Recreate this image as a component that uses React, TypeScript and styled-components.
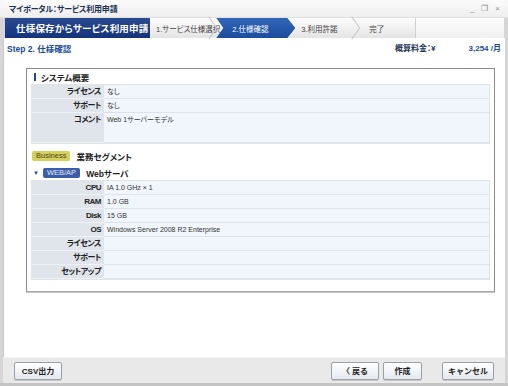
import React, { FC } from 'react';
import styled, { createGlobalStyle, css } from 'styled-components';

const GlobalStyle = createGlobalStyle`
  html, body {
    margin: 0;
    padding: 0;
    background: #ffffff;
  }

  body {
    font-family: "Liberation Sans", "Noto Sans CJK JP", sans-serif;
    font-feature-settings: "palt";
    color: #222;
  }
`;

const Window = styled.div`
  box-sizing: border-box;
  display: flex;
  flex-direction: column;
  width: 508px;
  height: 386px;
  background: #d6d6d6;
  border-radius: 3px 3px 0 0;
  overflow: hidden;
`;

const TitleBar = styled.div`
  align-items: center;
  background: linear-gradient(#fbfbfb, #eeeeee);
  border-bottom: 1px solid #e0e0e0;
  display: flex;
  height: 17px;
  justify-content: space-between;
  padding: 0 8px 0 9px;
`;

const TitleText = styled.span`
  color: #223355;
  font-size: 8px;
  font-weight: bold;
  letter-spacing: -0.2px;
`;

const Controls = styled.div`
  color: #8a8a8a;
  display: flex;
  font-size: 8px;
  gap: 7px;
`;

const Header = styled.div`
  background: linear-gradient(#fdfdfd, #e4e4e4);
  display: flex;
  height: 20px;
  margin: 0 4px 0 5px;
`;

const HeaderTitle = styled.div`
  align-items: center;
  background: linear-gradient(#2a4a90, #15337a);
  box-sizing: border-box;
  color: #ffffff;
  display: flex;
  flex: 0 0 145px;
  font-size: 9.5px;
  font-weight: bold;
  letter-spacing: 0.2px;
  padding-left: 11px;
  white-space: nowrap;
`;

const Steps = styled.div`
  display: flex;
  flex: 1;
`;

const Step = styled.div<{ $active?: boolean; $width: number; $last?: boolean }>`
  align-items: center;
  box-sizing: border-box;
  color: #444;
  display: flex;
  flex: 0 0 ${({ $width }) => $width}px;
  font-size: 7.5px;
  height: 20px;
  position: relative;
  white-space: nowrap;

  ${({ $active }) =>
    $active
      ? css`
          background: linear-gradient(#3266b8, #1b4c9e);
          clip-path: polygon(0 0, calc(100% - 8px) 0, 100% 50%, calc(100% - 8px) 100%, 0 100%, 7px 50%);
          color: #ffffff;
          margin-left: -4px;
          padding-left: 16px;
        `
      : css`
          padding-left: 6px;
        `}

  ${({ $active, $last }) =>
    !$active &&
    !$last &&
    css`
      &::after {
        border-right: 1px solid #c6c6c6;
        border-top: 1px solid #c6c6c6;
        content: '';
        height: 13px;
        position: absolute;
        right: 4px;
        top: 3px;
        transform: rotate(45deg) skew(10deg, 10deg);
        width: 13px;
      }
    `}

  ${({ $last }) =>
    $last &&
    css`
      border-right: 1px solid #d0d0d0;
    `}
`;

const HeaderRest = styled.div`
  background: linear-gradient(#fdfdfd, #f0f0f0);
  flex: 1;
`;

const Body = styled.div`
  background: #ffffff;
  border-left: 1px solid #c8c8c8;
  display: flex;
  flex: 1;
  flex-direction: column;
  margin: 0 3px 0 3px;
`;

const StepLine = styled.div`
  align-items: center;
  display: flex;
  height: 17px;
  padding: 1px 4px 0 3px;
`;

const StepTitle = styled.span`
  color: #1a4a9a;
  flex: 1;
  font-size: 8.5px;
  font-weight: bold;
`;

const Price = styled.span<{ $value?: boolean }>`
  color: ${({ $value }) => ($value ? '#1a4a9a' : '#223355')};
  font-size: 8px;
  font-weight: bold;
  margin-left: ${({ $value }) => ($value ? '33px' : '0')};
`;

const Panel = styled.div`
  border: 1px solid #8c8c8c;
  border-bottom-color: #a8a8a8;
  box-shadow: 0 1px 0 #c4c4c4;
  display: flex;
  flex-direction: column;
  height: 222px;
  margin: 12px 10px 0 22px;
  padding: 0 4px 0 4px;
`;

const SectionTitle = styled.div`
  align-items: center;
  display: flex;
  font-size: 8.5px;
  font-weight: bold;
  height: 15px;
  padding-left: 3px;

  &::before {
    background: #1a4a9a;
    content: '';
    height: 8px;
    margin-right: 5px;
    width: 2px;
  }
`;

const Table = styled.div`
  border: 1px solid #dfe4e8;
  display: grid;
  grid-template-columns: 72px 1fr;
`;

const Label = styled.div<{ $height?: number }>`
  align-items: flex-start;
  background: #dfe5ea;
  border-bottom: 1px solid #eef2f5;
  box-sizing: border-box;
  display: flex;
  font-size: 8px;
  font-weight: bold;
  height: ${({ $height }) => $height ?? 14}px;
  justify-content: flex-end;
  letter-spacing: -0.5px;
  line-height: 13px;
  padding-right: 3px;
`;

const Value = styled.div<{ $height?: number }>`
  background: #f0f6fb;
  border-bottom: 1px solid #dde3e8;
  box-sizing: border-box;
  color: #333;
  font-size: 7px;
  height: ${({ $height }) => $height ?? 14}px;
  line-height: 13px;
  padding-left: 3px;
`;

const GroupRow = styled.div<{ $gap: number }>`
  align-items: center;
  display: flex;
  font-size: 8.5px;
  font-weight: bold;
  height: 14px;
  margin-top: ${({ $gap }) => $gap}px;
`;

const Badge = styled.span<{ $tone: 'business' | 'web' }>`
  border-radius: 2px;
  font-size: 7.5px;
  font-weight: normal;
  line-height: 10px;
  margin-right: 6px;
  padding: 0 4px;

  ${({ $tone }) =>
    $tone === 'business'
      ? css`
          background: #d5cf5c;
          color: #4a4620;
          margin-left: 1px;
        `
      : css`
          background: #3b5ca6;
          color: #e6ecf8;
        `}
`;

const Caret = styled.span`
  color: #1a4a9a;
  font-size: 6px;
  margin: 0 4px 0 2px;
`;

const Footer = styled.div`
  align-items: center;
  background: #e9e9e9;
  border-top: 1px solid #f4f4f4;
  display: flex;
  height: 25px;
  margin: 0 3px;
  padding: 0 11px 0 11px;
`;

const Button = styled.button<{ $width: number; $gap?: number }>`
  background: linear-gradient(#ffffff, #e4e8ee);
  border: 1px solid #9aa0a8;
  border-radius: 2px;
  box-shadow: 0 1px 0 #c8c8c8;
  color: #222;
  cursor: pointer;
  font-family: inherit;
  font-size: 8px;
  font-weight: bold;
  height: 18px;
  margin-left: ${({ $gap }) => $gap ?? 0}px;
  padding: 0;
  width: ${({ $width }) => $width}px;
`;

const Spacer = styled.div`
  flex: 1;
`;

const BottomEdge = styled.div`
  background: #c4c4c4;
  height: 3px;
`;

type Row = { label: string; value?: string; height?: number };

const summary: Row[] = [
  { label: 'ライセンス', value: 'なし' },
  { label: 'サポート', value: 'なし' },
  { label: 'コメント', value: 'Web 1サーバーモデル', height: 30 },
];

const server: Row[] = [
  { label: 'CPU', value: 'IA 1.0 GHz × 1' },
  { label: 'RAM', value: '1.0 GB' },
  { label: 'Disk', value: '15 GB' },
  { label: 'OS', value: 'Windows Server 2008 R2 Enterprise' },
  { label: 'ライセンス' },
  { label: 'サポート' },
  { label: 'セットアップ' },
];

const DetailTable: FC<{ rows: Row[] }> = ({ rows }) => (
  <Table>
    {rows.map((row) => (
      <React.Fragment key={row.label}>
        <Label $height={row.height}>{row.label}</Label>
        <Value $height={row.height}>{row.value}</Value>
      </React.Fragment>
    ))}
  </Table>
);

const App: FC = () => (
  <>
    <GlobalStyle />
    <Window>
      <TitleBar>
        <TitleText>マイポータル：サービス利用申請</TitleText>
        <Controls>
          <span>_</span>
          <span>❐</span>
          <span>×</span>
        </Controls>
      </TitleBar>

      <Header>
        <HeaderTitle>仕様保存からサービス利用申請</HeaderTitle>
        <Steps>
          <Step $width={68}>1.サービス仕様選択</Step>
          <Step $width={79} $active>2.仕様確認</Step>
          <Step $width={68}>3.利用許諾</Step>
          <Step $width={53} $last>完了</Step>
          <HeaderRest />
        </Steps>
      </Header>

      <Body>
        <StepLine>
          <StepTitle>Step 2. 仕様確認</StepTitle>
          <Price>概算料金：¥</Price>
          <Price $value>3,254 /月</Price>
        </StepLine>

        <Panel>
          <SectionTitle>システム概要</SectionTitle>
          <DetailTable rows={summary} />

          <GroupRow $gap={5}>
            <Badge $tone="business">Business</Badge>
            業務セグメント
          </GroupRow>

          <GroupRow $gap={3}>
            <Caret>▼</Caret>
            <Badge $tone="web">WEB/AP</Badge>
            Webサーバ
          </GroupRow>
          <DetailTable rows={server} />
        </Panel>
      </Body>

      <Footer>
        <Button $width={48}>CSV出力</Button>
        <Spacer />
        <Button $width={48}>〈 戻る</Button>
        <Button $width={39} $gap={4}>作成</Button>
        <Button $width={52} $gap={20}>キャンセル</Button>
      </Footer>
      <BottomEdge />
    </Window>
  </>
);

export default App;
